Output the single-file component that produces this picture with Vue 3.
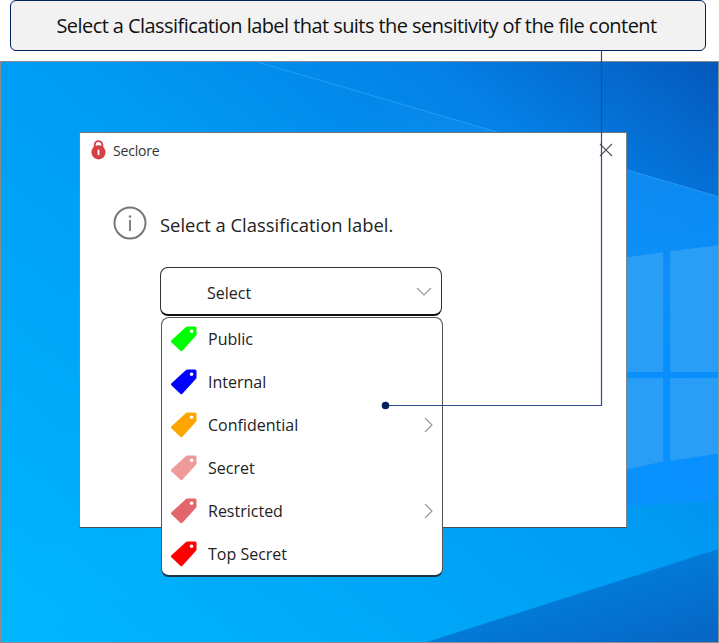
<script setup>
const labels = [
  { name: 'Public', color: '#00ff00' },
  { name: 'Internal', color: '#0000ff' },
  { name: 'Confidential', color: '#ffa500', more: true },
  { name: 'Secret', color: '#ee9a9a' },
  { name: 'Restricted', color: '#e2666b', more: true },
  { name: 'Top Secret', color: '#ff0000' }
]
</script>

<template>
  <div class="page">
    <div class="banner">Select a Classification label that suits the sensitivity of the file content</div>

    <div class="desktop">
      <svg class="wallpaper" viewBox="0 0 719 582" preserveAspectRatio="none" aria-hidden="true">
        <defs>
          <linearGradient id="wall" x1="0" y1="1" x2="1" y2="0">
            <stop offset="0" stop-color="#00b6ff" />
            <stop offset="0.55" stop-color="#009bf3" />
            <stop offset="0.8" stop-color="#0480e6" />
            <stop offset="1" stop-color="#0558bc" />
          </linearGradient>
          <linearGradient id="beam" x1="0.3" y1="0" x2="1" y2="0.5">
            <stop offset="0" stop-color="#2aa8ff" stop-opacity="0" />
            <stop offset="1" stop-color="#0a90ff" stop-opacity="0.85" />
          </linearGradient>
          <linearGradient id="corner" x1="0" y1="0" x2="1" y2="1">
            <stop offset="0" stop-color="#0090ea" />
            <stop offset="1" stop-color="#0664c4" />
          </linearGradient>
        </defs>
        <rect width="719" height="582" fill="url(#wall)" />
        <polygon points="257,0 719,135 719,440 400,460" fill="url(#beam)" />
        <polygon points="0,489 160,466 420,440 0,582" fill="#00c0ff" opacity="0.12" />
        <polygon points="719,489 719,582 427,582" fill="url(#corner)" />
        <line x1="257" y1="0" x2="719" y2="135" stroke="#3db0ff" stroke-width="1" opacity="0.55" />
        <polygon points="627,196 664,191 664,311 627,311" fill="#2a9ef6" />
        <polygon points="671,190 719,184 719,311 671,311" fill="#2a9ef6" />
        <polygon points="627,317 664,317 664,401 627,409" fill="#2a9ef6" />
        <polygon points="671,317 719,317 719,393 671,400" fill="#2a9ef6" />
      </svg>

      <section class="dialog">
        <header class="titlebar">
          <svg class="lock" viewBox="0 0 16 21" aria-hidden="true">
            <path d="M4 9V5a4 4 0 0 1 8 0v4" fill="none" stroke="#d63f44" stroke-width="2" />
            <circle cx="8" cy="13" r="7.5" fill="#d63f44" />
            <rect x="7" y="10" width="2" height="6" rx="1" fill="#fff" />
          </svg>
          <span class="title">Seclore</span>
          <svg class="close" viewBox="0 0 14 14" aria-hidden="true">
            <path d="M1 1l12 12M13 1L1 13" stroke="#555" stroke-width="1.1" fill="none" />
          </svg>
        </header>

        <div class="prompt">
          <svg class="info" viewBox="0 0 34 34" aria-hidden="true">
            <circle cx="17" cy="17" r="15.5" fill="none" stroke="#777" stroke-width="2" />
            <circle cx="17" cy="10.5" r="1.2" fill="#777" />
            <rect x="16.1" y="14" width="1.8" height="11" fill="#777" />
          </svg>
          <span class="prompt-text">Select a Classification label.</span>
        </div>

        <div class="picker">
          <div class="select">
            <span>Select</span>
            <svg class="chev-down" viewBox="0 0 16 9" aria-hidden="true">
              <path d="M1 1l7 7 7-7" fill="none" stroke="#999" stroke-width="1.2" />
            </svg>
          </div>
          <ul class="menu">
            <li v-for="item in labels" :key="item.name" class="row">
              <svg class="tag" viewBox="0 0 26 26" aria-hidden="true">
                <path
                  fill-rule="evenodd"
                  :fill="item.color"
                  d="M16.5 .5h7.5a1.5 1.5 0 0 1 1.5 1.5V8.5a2 2 0 0 1-.5 1.3L11.6 24.6a1.6 1.6 0 0 1-2.3.1L.6 16.6a1.6 1.6 0 0 1-.1-2.3L15 1.1A2 2 0 0 1 16.5 .5ZM20.6 3.4a1.8 1.8 0 1 0 .01 0Z"
                />
              </svg>
              <span class="row-name">{{ item.name }}</span>
              <svg v-if="item.more" class="chev-right" viewBox="0 0 9 16" aria-hidden="true">
                <path d="M1 1l7 7-7 7" fill="none" stroke="#999" stroke-width="1.2" />
              </svg>
            </li>
          </ul>
        </div>
      </section>
    </div>

    <svg class="callout" viewBox="0 0 719 643" aria-hidden="true">
      <path d="M601.5 51V405.5H386" fill="none" stroke="#2c4a8c" stroke-width="1.2" />
      <circle cx="385.5" cy="405.5" r="3.8" fill="#002060" />
    </svg>
  </div>
</template>

<style>
html, body { margin: 0; background: #fff; }
</style>

<style scoped>
.page {
  position: relative;
  width: 719px;
  height: 643px;
  overflow: hidden;
  font-family: "Open Sans", "Noto Sans", sans-serif;
  color: #222;
}
.banner {
  box-sizing: border-box;
  width: 696px;
  height: 51px;
  margin-left: 9.5px;
  padding-right: 2px;
  display: flex;
  align-items: center;
  justify-content: center;
  background: #f2f2f2;
  border: 1px solid #002060;
  border-radius: 6px;
  font-size: 20px;
  letter-spacing: -0.56px;
  color: #111;
}
.desktop {
  position: relative;
  box-sizing: border-box;
  height: 582px;
  margin-top: 10px;
  padding: 70px 91px 0 78px;
  border: 1px solid #8c8c8c;
}
.wallpaper {
  position: absolute;
  inset: 0;
  width: 100%;
  height: 100%;
}
.dialog {
  position: relative;
  box-sizing: border-box;
  width: 548px;
  height: 396px;
  background: #fff;
  border: 1px solid #5c6a78;
  border-color: #6d7780 #7d858c #3f4c58 #7d858c;
}
.titlebar {
  display: flex;
  align-items: center;
  height: 34px;
  padding: 0 13px 0 11px;
}
.lock { width: 15px; height: 20px; margin-top: -1px; }
.title {
  margin-left: 7px;
  font-size: 14px;
  color: #333;
  letter-spacing: -0.2px;
  flex: 1;
}
.close { width: 14px; height: 14px; }
.prompt {
  display: flex;
  align-items: center;
  margin: 39px 0 0 33px;
  height: 34px;
}
.info { width: 34px; height: 34px; }
.prompt-text {
  margin-left: 13px;
  margin-top: 3px;
  font-size: 18.4px;
  color: #222;
}
.picker {
  width: 282px;
  margin: 27px 0 0 80px;
}
.select {
  box-sizing: border-box;
  height: 49px;
  display: flex;
  align-items: center;
  justify-content: space-between;
  padding: 3px 9px 0 46px;
  background: #fff;
  border: 1.5px solid #333;
  border-bottom: 2px solid #111;
  border-radius: 8px;
  font-size: 16px;
}
.chev-down { width: 16px; height: 9px; margin-top: -3px; }
.menu {
  box-sizing: border-box;
  list-style: none;
  width: 282px;
  height: 260px;
  margin: 1px 0 0 1px;
  padding: 0 0 0 9px;
  background: #fff;
  border: 1.5px solid #555;
  border-bottom: 2px solid #1d3346;
  border-radius: 8px;
  position: relative;
}
.row {
  display: flex;
  align-items: center;
  height: 43px;
  padding-right: 9px;
}
.row:first-child { margin-top: -1px; }
.tag { width: 26px; height: 26px; flex: none; }
.row-name {
  margin-left: 11px;
  font-size: 16px;
  flex: 1;
}
.chev-right { width: 9px; height: 16px; }
.callout {
  position: absolute;
  inset: 0;
  width: 719px;
  height: 643px;
  pointer-events: none;
}
</style>
